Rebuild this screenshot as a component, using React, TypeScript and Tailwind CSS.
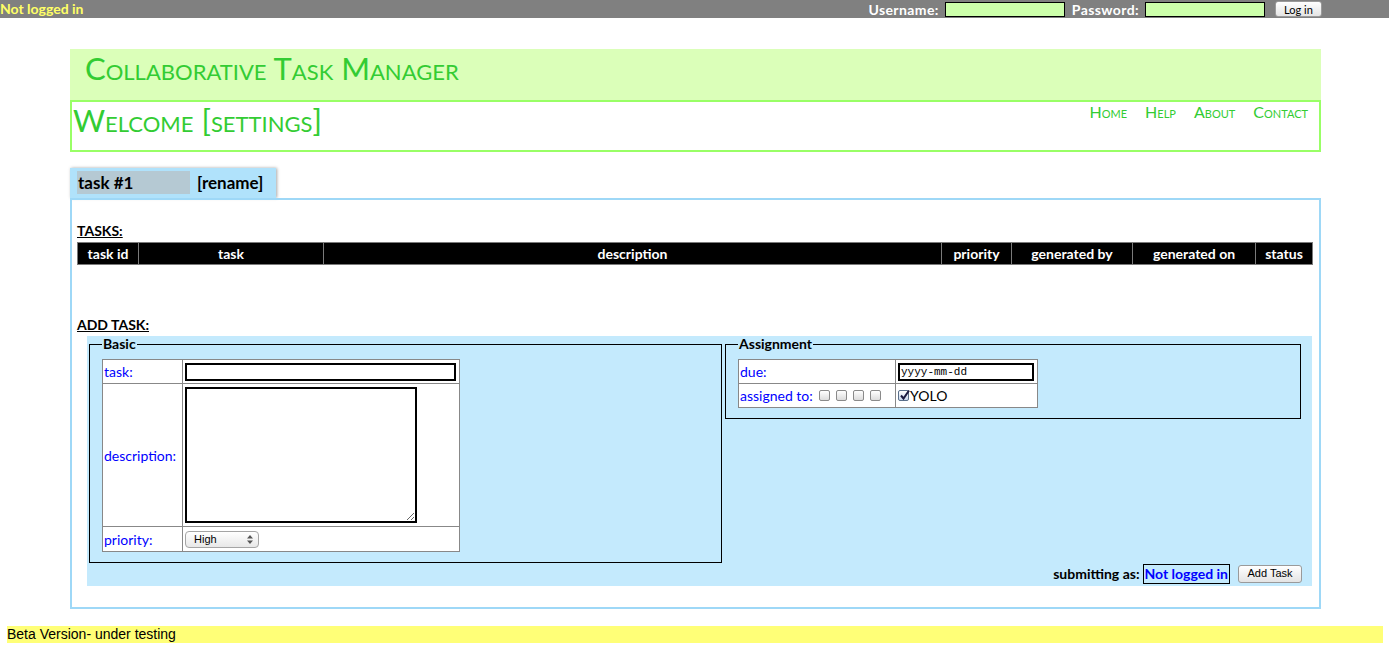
export default function App() {
  const cols = [
    { label: "task id", w: "w-[61px]" },
    { label: "task", w: "w-[185px]" },
    { label: "description", w: "" },
    { label: "priority", w: "w-[70px]" },
    { label: "generated by", w: "w-[121px]" },
    { label: "generated on", w: "w-[123px]" },
    { label: "status", w: "w-[57px]" },
  ]

  return (
    <div className="min-h-screen bg-white font-['Lato',sans-serif] text-black">
      {/* top login bar */}
      <div className="flex h-[18px] items-center justify-between bg-[#808080]">
        <span className="text-[14px] leading-none font-bold text-[#ffff66]">Not logged in</span>
        <div className="flex items-center pr-[67px] text-[14px] font-bold text-white">
          <span className="mr-[6px] tracking-[0.4px]">Username:</span>
          <input className="h-[15px] w-[120px] border border-black bg-[#ccffaa]" />
          <span className="mr-[6px] ml-[7px] tracking-[0.4px]">Password:</span>
          <input className="h-[15px] w-[120px] border border-black bg-[#ccffaa]" />
          <button className="ml-[10px] h-[16px] w-[47px] rounded-[3px] border border-[#9a9a9a] bg-gradient-to-b from-white to-[#e4e4e4] text-[11px] leading-none font-normal text-black">
            Log in
          </button>
        </div>
      </div>

      <div className="mx-[70px] mt-[31px] w-[1251px]">
        {/* header */}
        <div className="h-[51px] bg-[#dbffb9] pt-[2px] pl-[15px] text-[31px] leading-[34px] text-[#33cc33] [font-variant:small-caps]">
          Collaborative Task Manager
        </div>
        <div className="flex h-[52px] justify-between border-2 border-[#99ff66]">
          <div className="pt-[1px] pl-[1px] text-[31px] leading-[34px] text-[#33cc33] [font-variant:small-caps]">
            Welcome [settings]
          </div>
          <div className="flex gap-[18px] pr-[11px] text-[16px] leading-[20px] text-[#33cc33] [font-variant:small-caps]">
            <span>Home</span>
            <span>Help</span>
            <span>About</span>
            <span>Contact</span>
          </div>
        </div>

        {/* tab */}
        <div className="mt-[16px] flex h-[30px] w-[206px] items-start bg-[#b0e2fb] pt-[3px] pl-[7px] shadow-[1px_0_3px_rgba(0,0,0,0.35)]">
          <div className="h-[23px] w-[113px] bg-[#b5c9d3] pl-[1px] text-[17px] leading-[23px] font-bold">task #1</div>
          <div className="ml-[7px] text-[17px] leading-[23px] font-bold">[rename]</div>
        </div>

        {/* panel */}
        <div className="h-[411px] border-2 border-[#9ed8f7] px-[5px] pt-[23px]">
          <div className="text-[14px] leading-[16px] font-bold underline">TASKS:</div>
          <table className="mt-[3px] w-[1236px] border-collapse bg-black text-white">
            <thead>
              <tr>
                {cols.map((c) => (
                  <th key={c.label} className={`${c.w} h-[22px] border border-[#7a7a7a] p-0 text-[14px] leading-none font-bold`}>
                    {c.label}
                  </th>
                ))}
              </tr>
            </thead>
          </table>

          <div className="mt-[52px] text-[14px] leading-[16px] font-bold underline">ADD TASK:</div>

          <div className="mt-[3px] mr-[2px] ml-[10px] flex h-[250px] flex-col bg-[#c4eafd] pl-[2px]">
            <div className="flex items-start gap-[3px]">
              <fieldset className="h-[227px] w-[633px] border border-black px-[12px] pt-0">
                <legend className="px-[1px] text-[14px] leading-[16px] font-bold">Basic</legend>
                <table className="mt-[7px] border-collapse bg-white text-[14px] text-[#0000ff]">
                  <tbody>
                    <tr className="h-[24px]">
                      <td className="w-[80px] border border-[#888] px-[1px] py-0">task:</td>
                      <td className="w-[277px] border border-[#888] px-[2px] py-0">
                        <input className="block h-[18px] w-[271px] border-2 border-black bg-white" />
                      </td>
                    </tr>
                    <tr className="h-[143px]">
                      <td className="border border-[#888] px-[1px] py-0">description:</td>
                      <td className="border border-[#888] px-[2px] py-0">
                        <textarea className="block h-[136px] w-[232px] border-2 border-black bg-white" />
                      </td>
                    </tr>
                    <tr className="h-[25px]">
                      <td className="border border-[#888] px-[1px] py-0">priority:</td>
                      <td className="border border-[#888] px-[2px] py-0">
                        <div className="flex h-[17px] w-[74px] items-center justify-between rounded-[4px] border border-[#a5a5a5] bg-gradient-to-b from-white to-[#e8e8e8] pr-[5px] pl-[8px] font-['Liberation_Sans',sans-serif] text-[11px] text-black">
                          <span>High</span>
                          <svg width="6" height="9" viewBox="0 0 6 9">
                            <path d="M0 3.5 L3 0 L6 3.5Z M0 5.5 L3 9 L6 5.5Z" fill="#555" />
                          </svg>
                        </div>
                      </td>
                    </tr>
                  </tbody>
                </table>
              </fieldset>

              <fieldset className="h-[83px] w-[576px] border border-black px-[12px] pt-0">
                <legend className="px-[1px] text-[14px] leading-[16px] font-bold">Assignment</legend>
                <table className="mt-[7px] border-collapse bg-white text-[14px] text-[#0000ff]">
                  <tbody>
                    <tr className="h-[24px]">
                      <td className="w-[157px] border border-[#888] px-[1px] py-0">due:</td>
                      <td className="w-[142px] border border-[#888] px-[2px] py-0">
                        <input
                          defaultValue="yyyy-mm-dd"
                          className="block h-[18px] w-[136px] border-2 border-black bg-white pl-[1px] font-['Liberation_Mono',monospace] text-[11px] text-black"
                        />
                      </td>
                    </tr>
                    <tr className="h-[24px]">
                      <td className="border border-[#888] px-[1px] py-0">
                        <div className="flex items-center gap-[6px]">
                          <span>assigned to:</span>
                          <span className="flex gap-[6px]">
                            {[0, 1, 2, 3].map((i) => (
                              <span key={i} className="block h-[11px] w-[11px] rounded-[2px] border border-[#8a8a8a] bg-gradient-to-b from-white to-[#dcdcdc]" />
                            ))}
                          </span>
                        </div>
                      </td>
                      <td className="border border-[#888] px-[2px] py-0 text-black">
                        <div className="flex items-center gap-[1px]">
                          <span className="relative block h-[11px] w-[11px] rounded-[2px] border border-[#5a6f8a] bg-gradient-to-b from-white to-[#c9d8ee]">
                            <svg className="absolute -top-[2px] left-0" width="12" height="12" viewBox="0 0 12 12">
                              <path d="M2 6.5 L4.5 9.5 L10 1.5" stroke="#1a1a40" strokeWidth="2" fill="none" />
                            </svg>
                          </span>
                          <span>YOLO</span>
                        </div>
                      </td>
                    </tr>
                  </tbody>
                </table>
              </fieldset>
            </div>

            <div className="mt-auto mb-[2px] flex items-center justify-end pr-[10px]">
              <span className="mr-[3px] text-[14px] font-bold">submitting as:</span>
              <span className="border border-black px-[1px] text-[14px] leading-[18px] font-bold text-[#0000ff]">Not logged in</span>
              <button className="ml-[8px] h-[18px] w-[64px] rounded-[3px] border border-[#9a9a9a] bg-gradient-to-b from-white to-[#e4e4e4] font-['Liberation_Sans',sans-serif] text-[11px] leading-none text-black">
                Add Task
              </button>
            </div>
          </div>
        </div>
      </div>

      {/* footer */}
      <div className="mt-[17px] mr-[6px] ml-[7px] h-[17px] bg-[#ffff77] font-['Liberation_Sans',sans-serif] text-[14px] leading-[17px]">
        Beta Version- under testing
      </div>
    </div>
  )
}
